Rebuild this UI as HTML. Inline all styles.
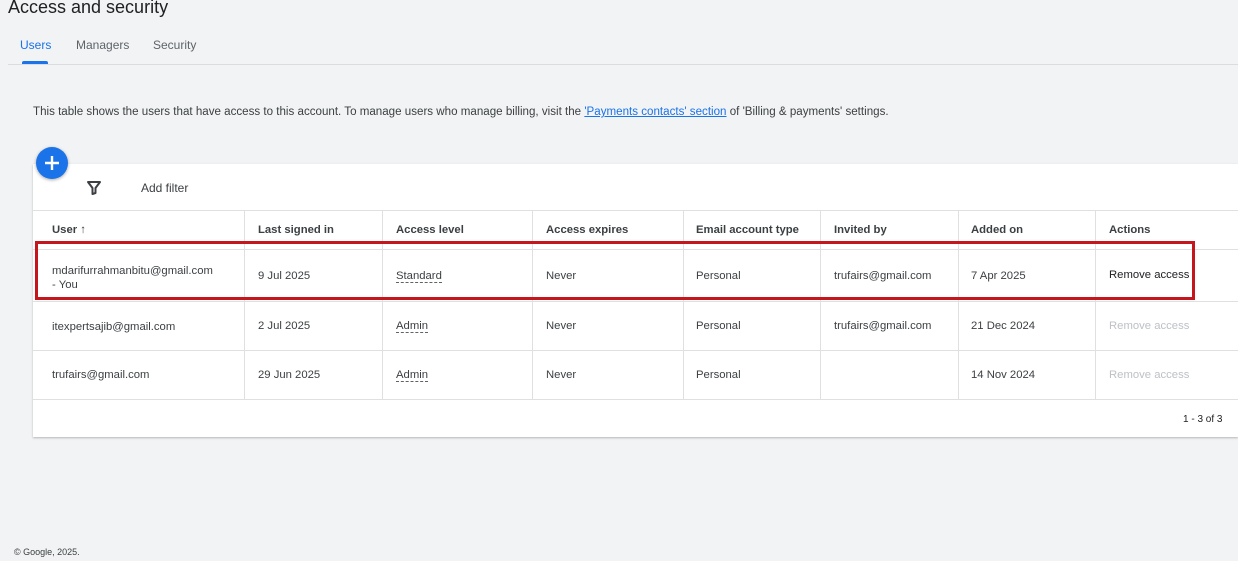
<!DOCTYPE html>
<html><head><style>
body{margin:0;width:1238px;height:561px;background:#f1f3f4;font-family:"Liberation Sans",Arial,sans-serif;color:#3c4043;position:relative;overflow:hidden}
.a{position:absolute;white-space:nowrap}
.t{position:absolute;left:33px;top:164px;width:1205px;height:273px;background:#fff;box-shadow:0 1px 2px rgba(0,0,0,.25)}
.hl{position:absolute;left:0;width:1205px;height:1px;background:#e0e0e0}
.vl{position:absolute;top:46px;width:1px;height:189px;background:#e0e0e0}
.c{position:absolute;font-size:11.3px;color:#3c4043;white-space:nowrap}
.h{font-weight:bold;color:#3c4043}
.u{border-bottom:1px dashed #5f6368}
.g{color:#bdc1c6}
</style></head><body>
<div class="a" style="left:8px;top:-3px;font-size:18px;color:#202124">Access and security</div>
<div class="a" style="left:20px;top:38px;font-size:12px;color:#1a73e8">Users</div>
<div class="a" style="left:22px;top:61px;width:26px;height:3px;background:#1a73e8;border-radius:2px 2px 0 0"></div>
<div class="a" style="left:76px;top:38px;font-size:12px;color:#5f6368">Managers</div>
<div class="a" style="left:153px;top:38px;font-size:12px;color:#5f6368">Security</div>
<div class="a" style="left:8px;top:64px;width:1230px;height:1px;background:#dadce0"></div>
<div class="a" style="left:33px;top:106px;font-size:11.58px;color:#3c4043">This table shows the users that have access to this account. To manage users who manage billing, visit the <span style="color:#1a73e8;text-decoration:underline">'Payments contacts' section</span> of 'Billing &amp; payments' settings.</div>
<div class="t">
 <svg style="position:absolute;left:53px;top:16px" width="16" height="16" viewBox="0 0 16 16"><path d="M2 2h12L9.5 8v5l-3 1V8z" fill="none" stroke="#3c4043" stroke-width="2" stroke-linejoin="round"/></svg>
 <div class="c" style="left:108px;top:17px;font-size:12px">Add filter</div>
 <div class="hl" style="top:46px"></div><div class="hl" style="top:85px"></div><div class="hl" style="top:137px"></div><div class="hl" style="top:186px"></div><div class="hl" style="top:235px"></div>
 <div class="vl" style="left:211px"></div><div class="vl" style="left:349px"></div><div class="vl" style="left:499px"></div><div class="vl" style="left:650px"></div><div class="vl" style="left:787px"></div><div class="vl" style="left:925px"></div><div class="vl" style="left:1062px"></div>
 <div class="c h" style="left:19px;top:60px">User <span style="font-weight:normal">↑</span></div>
 <div class="c h" style="left:225px;top:60px">Last signed in</div>
 <div class="c h" style="left:363px;top:60px">Access level</div>
 <div class="c h" style="left:513px;top:60px">Access expires</div>
 <div class="c h" style="left:663px;top:60px">Email account type</div>
 <div class="c h" style="left:801px;top:60px">Invited by</div>
 <div class="c h" style="left:938px;top:60px">Added on</div>
 <div class="c h" style="left:1076px;top:60px">Actions</div>

 <div class="c" style="left:19px;top:100px;line-height:14px">mdarifurrahmanbitu@gmail.com<br>- You</div>
 <div class="c" style="left:225px;top:106px">9 Jul 2025</div>
 <div class="c" style="left:363px;top:106px"><span class="u">Standard</span></div>
 <div class="c" style="left:513px;top:106px">Never</div>
 <div class="c" style="left:663px;top:106px">Personal</div>
 <div class="c" style="left:801px;top:106px">trufairs@gmail.com</div>
 <div class="c" style="left:938px;top:106px">7 Apr 2025</div>
 <div class="c" style="left:1076px;top:105px;color:#202124">Remove access</div>

 <div class="c" style="left:19px;top:157px">itexpertsajib@gmail.com</div>
 <div class="c" style="left:225px;top:156px">2 Jul 2025</div>
 <div class="c" style="left:363px;top:156px"><span class="u">Admin</span></div>
 <div class="c" style="left:513px;top:156px">Never</div>
 <div class="c" style="left:663px;top:156px">Personal</div>
 <div class="c" style="left:801px;top:156px">trufairs@gmail.com</div>
 <div class="c" style="left:938px;top:156px">21 Dec 2024</div>
 <div class="c g" style="left:1076px;top:156px">Remove access</div>

 <div class="c" style="left:19px;top:205px">trufairs@gmail.com</div>
 <div class="c" style="left:225px;top:205px">29 Jun 2025</div>
 <div class="c" style="left:363px;top:205px"><span class="u">Admin</span></div>
 <div class="c" style="left:513px;top:205px">Never</div>
 <div class="c" style="left:663px;top:205px">Personal</div>
 <div class="c" style="left:938px;top:205px">14 Nov 2024</div>
 <div class="c g" style="left:1076px;top:205px">Remove access</div>

 <div class="c" style="left:1150px;top:250px;font-size:10px;color:#202124">1 - 3 of 3</div>
</div>
<div class="a" style="left:36px;top:147px;width:32px;height:32px;border-radius:50%;background:#1a73e8;box-shadow:0 1px 3px rgba(0,0,0,.35)"><svg width="32" height="32" viewBox="0 0 32 32"><path d="M16 9v14M9 16h14" stroke="#fff" stroke-width="2.4"/></svg></div>
<div class="a" style="left:35px;top:241px;width:1154px;height:53px;border:3px solid #c5161d"></div>
<div class="a" style="left:14px;top:547px;font-size:9px;color:#3c4043">© Google, 2025.</div>
</body></html>
